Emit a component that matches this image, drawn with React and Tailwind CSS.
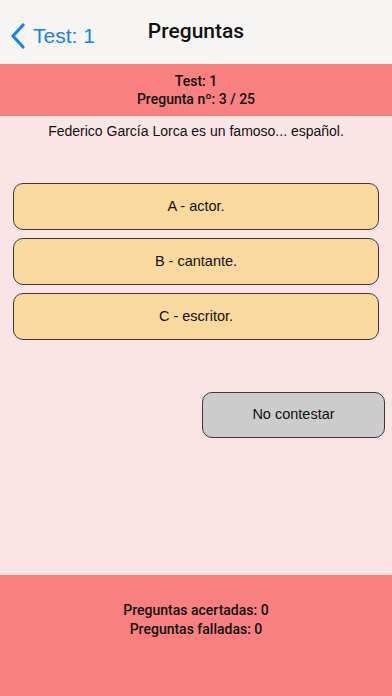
export default function App() {
  const options = ['A - actor.', 'B - cantante.', 'C - escritor.'];
  return (
    <div className="flex h-[696px] w-[392px] flex-col bg-[#fbe4e6] font-['Liberation_Sans',Arial,sans-serif] text-[#111]">
      {/* nav bar */}
      <div className="relative flex h-16 shrink-0 items-center justify-center bg-[#f7f5f4]">
        <div className="absolute left-[10px] top-[20px] flex items-center gap-[7px] text-[#1a7ef5]">
          <svg width="16" height="26" viewBox="0 0 16 26" fill="none">
            <path d="M13 2 L3 13 L13 24" stroke="currentColor" strokeWidth="3.2" strokeLinecap="round" strokeLinejoin="round" />
          </svg>
          <span className="text-[21px]">Test: 1</span>
        </div>
        <span className="font-['Roboto',sans-serif] text-[21px] font-medium">Preguntas</span>
      </div>

      {/* header info */}
      <div className="flex h-[52px] shrink-0 flex-col items-center justify-center bg-[#f88080] font-['Roboto',sans-serif] text-[14px] font-medium leading-[18px]">
        <span>Test: 1</span>
        <span>Pregunta nº: 3 / 25</span>
      </div>

      <p className="mt-[6px] text-center text-[14px] leading-[18px]">
        Federico García Lorca es un famoso... español.
      </p>

      <div className="mt-[43px] flex flex-col gap-2 px-[13px]">
        {options.map((o) => (
          <button
            key={o}
            className="flex h-[47px] w-full items-center justify-center rounded-[10px] border border-[#3a3a3a] bg-[#f9d9a0] text-[14.5px]"
          >
            {o}
          </button>
        ))}
      </div>

      <div className="mt-[52px] flex justify-end pr-[7px]">
        <button className="flex h-[46px] w-[183px] items-center justify-center rounded-[10px] border border-[#3a3a3a] bg-[#cccccc] text-[14.5px]">
          No contestar
        </button>
      </div>

      <div className="flex-1" />

      {/* footer */}
      <div className="flex h-[121px] shrink-0 flex-col items-center bg-[#f88080] pt-[26px] font-['Roboto',sans-serif] text-[14px] font-medium leading-[19px]">
        <span>Preguntas acertadas: 0</span>
        <span>Preguntas falladas: 0</span>
      </div>
    </div>
  );
}
